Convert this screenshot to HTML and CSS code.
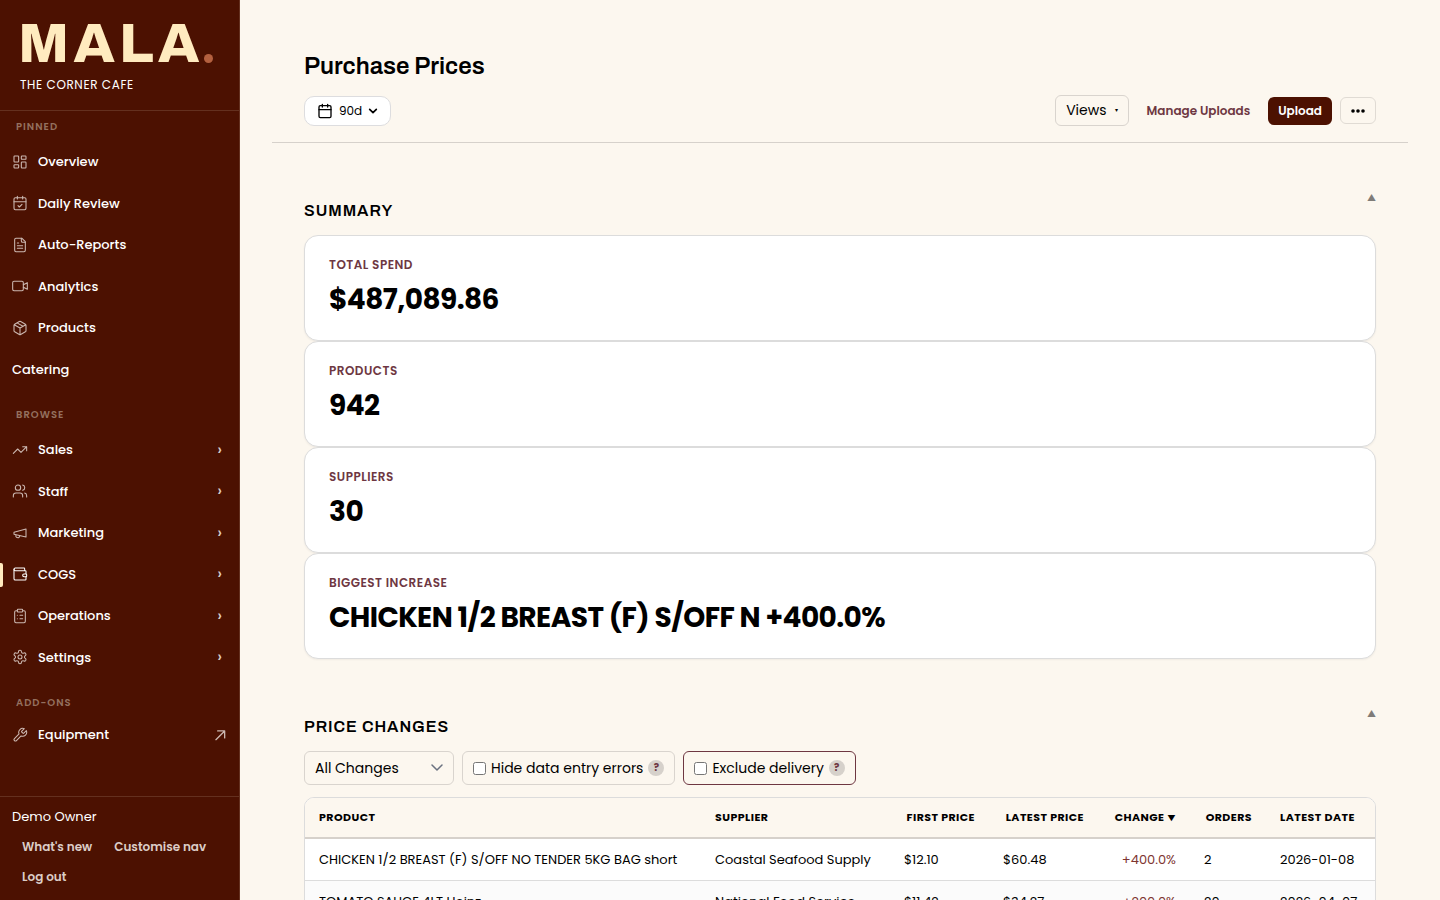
FILE: index.html
```html
<!DOCTYPE html>
<html lang="en">
<head>
<meta charset="utf-8">
<meta name="viewport" content="width=device-width, initial-scale=1">
<title>Purchase Prices</title>
<link rel="stylesheet" href="styles.css">
</head>
<body>
<div class="app">
  <aside class="sidebar">
    <div class="brand">
      <div class="logo">MALA<span class="logo-dot"></span></div>
      <div class="venue">THE CORNER CAFE</div>
    </div>
    <nav class="nav">
      <h2 class="nav-label">PINNED</h2>
      <a class="nav-item" href="#"><svg class="icon" viewBox="0 0 24 24"><rect x="3" y="3" width="7" height="9" rx="1"/><rect x="14" y="3" width="7" height="5" rx="1"/><rect x="14" y="12" width="7" height="9" rx="1"/><rect x="3" y="16" width="7" height="5" rx="1"/></svg>Overview</a>
      <a class="nav-item" href="#"><svg class="icon" viewBox="0 0 24 24"><path d="M8 2v4M16 2v4M3 10h18M9 16l2 2 4-4"/><rect x="3" y="4" width="18" height="18" rx="2"/></svg>Daily Review</a>
      <a class="nav-item" href="#"><svg class="icon" viewBox="0 0 24 24"><path d="M15 2H6a2 2 0 0 0-2 2v16a2 2 0 0 0 2 2h12a2 2 0 0 0 2-2V7Z"/><path d="M14 2v4a2 2 0 0 0 2 2h4M10 9H8M16 13H8M16 17H8"/></svg>Auto-Reports</a>
      <a class="nav-item" href="#"><svg class="icon" viewBox="0 0 24 24"><rect x="1" y="5" width="16" height="14" rx="2"/><path d="M17 10l6-3v10l-6-3"/></svg>Analytics</a>
      <a class="nav-item" href="#"><svg class="icon" viewBox="0 0 24 24"><path d="M11 21.7a2 2 0 0 0 2 0l7-4a2 2 0 0 0 1-1.7V8a2 2 0 0 0-1-1.7l-7-4a2 2 0 0 0-2 0l-7 4A2 2 0 0 0 3 8v8a2 2 0 0 0 1 1.7zM12 22V12M3.3 7L12 12l8.7-5M7.5 4.3l9 5.1"/></svg>Products</a>
      <a class="nav-item" href="#">Catering</a>
      <h2 class="nav-label">BROWSE</h2>
      <a class="nav-item" href="#"><svg class="icon" viewBox="0 0 24 24"><path d="M22 7l-8.5 8.5-5-5L2 17M16 7h6v6"/></svg>Sales<span class="chevron">›</span></a>
      <a class="nav-item" href="#"><svg class="icon" viewBox="0 0 24 24"><path d="M16 21v-2a4 4 0 0 0-4-4H6a4 4 0 0 0-4 4v2M22 21v-2a4 4 0 0 0-3-3.9M16 3.1a4 4 0 0 1 0 7.8"/><circle cx="9" cy="7" r="4"/></svg>Staff<span class="chevron">›</span></a>
      <a class="nav-item" href="#"><svg class="icon" viewBox="0 0 24 24"><path d="M3 11l18-5v12L3 14zM11.6 16.8a3 3 0 1 1-5.8-1.6"/></svg>Marketing<span class="chevron">›</span></a>
      <a class="nav-item active" href="#" aria-current="page"><svg class="icon" viewBox="0 0 24 24"><path d="M19 7V4a1 1 0 0 0-1-1H5a2 2 0 0 0 0 4h15a1 1 0 0 1 1 1v4h-3a2 2 0 0 0 0 4h3a1 1 0 0 0 1-1v-2a1 1 0 0 0-1-1"/><path d="M3 5v14a2 2 0 0 0 2 2h15a1 1 0 0 0 1-1v-4"/></svg>COGS<span class="chevron">›</span></a>
      <a class="nav-item" href="#"><svg class="icon" viewBox="0 0 24 24"><rect x="8" y="2" width="8" height="4" rx="1"/><path d="M16 4h2a2 2 0 0 1 2 2v14a2 2 0 0 1-2 2H6a2 2 0 0 1-2-2V6a2 2 0 0 1 2-2h2M12 11h4M12 16h4M8 11h.01M8 16h.01"/></svg>Operations<span class="chevron">›</span></a>
      <a class="nav-item" href="#"><svg class="icon" viewBox="0 0 24 24"><path d="M12.2 2h-.4a2 2 0 0 0-2 2v.2a2 2 0 0 1-1 1.7l-.4.3a2 2 0 0 1-2 0l-.2-.1a2 2 0 0 0-2.7.7l-.2.4a2 2 0 0 0 .7 2.7l.2.1a2 2 0 0 1 1 1.7v.5a2 2 0 0 1-1 1.8l-.2.1a2 2 0 0 0-.7 2.7l.2.4a2 2 0 0 0 2.7.7l.2-.1a2 2 0 0 1 2 0l.4.3a2 2 0 0 1 1 1.7v.2a2 2 0 0 0 2 2h.4a2 2 0 0 0 2-2v-.2a2 2 0 0 1 1-1.7l.4-.3a2 2 0 0 1 2 0l.2.1a2 2 0 0 0 2.7-.7l.2-.4a2 2 0 0 0-.7-2.7l-.2-.1a2 2 0 0 1-1-1.8v-.5a2 2 0 0 1 1-1.7l.2-.1a2 2 0 0 0 .7-2.7l-.2-.4a2 2 0 0 0-2.7-.7l-.2.1a2 2 0 0 1-2 0l-.4-.3a2 2 0 0 1-1-1.7V4a2 2 0 0 0-2-2z"/><circle cx="12" cy="12" r="3"/></svg>Settings<span class="chevron">›</span></a>
      <h2 class="nav-label addons">ADD-ONS</h2>
      <a class="nav-item" href="#"><svg class="icon" viewBox="0 0 24 24"><path d="M14.7 6.3a1 1 0 0 0 0 1.4l1.6 1.6a1 1 0 0 0 1.4 0l3.8-3.8a6 6 0 0 1-7.9 7.9l-6.9 6.9a2.1 2.1 0 0 1-3-3l6.9-6.9a6 6 0 0 1 7.9-7.9z"/></svg>Equipment<svg class="icon external" viewBox="0 0 24 24"><path d="M5 20L20 5M8 5h12v12"/></svg></a>
    </nav>
    <footer class="account">
      <div class="user">Demo Owner</div>
      <div class="account-links"><a href="#">What's new</a><a href="#">Customise nav</a><a href="#">Log out</a></div>
    </footer>
  </aside>
  <main class="main">
    <header class="page-head">
      <h1 class="title">Purchase Prices</h1>
      <div class="toolbar">
        <button class="range" type="button"><svg class="calendar" viewBox="0 0 24 24"><path d="M8 2v4M16 2v4M3 10h18"/><rect x="3" y="4" width="18" height="18" rx="2"/></svg>90d<svg class="down" viewBox="0 0 12 12"><path d="M2 4l4 4 4-4"/></svg></button>
        <div class="actions">
          <button class="views" type="button">Views<span class="views-caret">▾</span></button>
          <a class="manage" href="#">Manage Uploads</a>
          <button class="upload" type="button">Upload</button>
          <button class="more" type="button" aria-label="More actions"><svg class="dots" viewBox="0 0 14 4"><circle cx="2" cy="2" r="1.8"/><circle cx="7" cy="2" r="1.8"/><circle cx="12" cy="2" r="1.8"/></svg></button>
        </div>
      </div>
    </header>
    <section class="section">
      <div class="section-head"><h2 class="section-title">SUMMARY</h2><button class="collapse" type="button" aria-label="Collapse summary">▲</button></div>
      <div class="card"><div class="card-label">TOTAL SPEND</div><div class="card-value">$487,089.86</div></div>
      <div class="card"><div class="card-label">PRODUCTS</div><div class="card-value">942</div></div>
      <div class="card"><div class="card-label">SUPPLIERS</div><div class="card-value">30</div></div>
      <div class="card"><div class="card-label">BIGGEST INCREASE</div><div class="card-value">CHICKEN 1/2 BREAST (F) S/OFF N +400.0%</div></div>
    </section>
    <section class="section">
      <div class="section-head"><h2 class="section-title">PRICE CHANGES</h2><button class="collapse" type="button" aria-label="Collapse price changes">▲</button></div>
      <div class="filters">
        <div class="select-wrap"><select class="select" aria-label="Change type"><option>All Changes</option></select><svg class="select-caret" viewBox="0 0 12 8"><path d="M1 1l5 5 5-5"/></svg></div>
        <label class="check"><input type="checkbox">Hide data entry errors<span class="help">?</span></label>
        <label class="check strong"><input type="checkbox">Exclude delivery<span class="help">?</span></label>
      </div>
      <div class="table-wrap">
        <table class="table">
          <colgroup><col><col class="c-supplier"><col class="c-first"><col class="c-latest"><col class="c-change"><col class="c-orders"><col class="c-date"></colgroup>
          <thead><tr><th>PRODUCT</th><th>SUPPLIER</th><th class="num">FIRST PRICE</th><th class="num">LATEST PRICE</th><th class="num">CHANGE <span class="sort">▼</span></th><th class="num">ORDERS</th><th>LATEST DATE</th></tr></thead>
          <tbody>
            <tr><td>CHICKEN 1/2 BREAST (F) S/OFF NO TENDER 5KG BAG short</td><td>Coastal Seafood Supply</td><td>$12.10</td><td>$60.48</td><td class="up">+400.0%</td><td>2</td><td>2026-01-08</td></tr>
            <tr><td>TOMATO SAUCE 4LT Heinz</td><td>National Food Service</td><td>$11.42</td><td>$34.27</td><td class="up">+200.0%</td><td>20</td><td>2026-04-07</td></tr>
          </tbody>
        </table>
      </div>
    </section>
  </main>
</div>
</body>
</html>
```
FILE: styles.css
```css
* { box-sizing: border-box; }
body {
  margin: 0;
  background: #fcf7ef;
  color: #000;
  font-family: Poppins, Inter, "Noto Sans", sans-serif;
  font-size: 13px;
  line-height: 1.5;
}
h1, h2 { margin: 0; }
a { color: inherit; text-decoration: none; }
button { font: inherit; color: inherit; cursor: pointer; }
svg { fill: none; stroke: currentColor; stroke-width: 2; stroke-linecap: round; stroke-linejoin: round; flex: none; }

.app { display: flex; height: 100vh; overflow: hidden; }

.sidebar {
  display: flex;
  flex-direction: column;
  flex: none;
  width: 240px;
  background: #4c1101;
  border-right: 1px solid #64301f;
  color: #fff;
}
.brand { padding: 17px 18px 16px; border-bottom: 1px solid #64301f; }
.logo {
  display: flex;
  align-items: center;
  height: 54px;
  color: #ffebbf;
  font-family: Archivo, "Liberation Sans", sans-serif;
  font-size: 56px;
  font-weight: 800;
  line-height: 54px;
  letter-spacing: 4px;
}
.logo-dot { width: 9px; height: 9px; margin-top: 28px; border-radius: 50%; background: #b4603f; }
.venue { margin-top: 5px; padding-left: 2px; font-size: 12px; line-height: 18px; letter-spacing: 0.05em; }
.nav { flex: 1; padding-top: 8px; }
.nav-label {
  margin: 0 16px 7px;
  color: #94705f;
  font-size: 10px;
  font-weight: 600;
  line-height: 15px;
  letter-spacing: 1px;
}
.nav-item + .nav-label { margin-top: 17px; }
.nav-item + .nav-label.addons { margin-bottom: 4px; }
.nav-item {
  position: relative;
  display: flex;
  align-items: center;
  gap: 10px;
  padding: 11px 12px;
  font-weight: 500;
}
.icon { width: 16px; height: 16px; color: #ccb8b1; stroke-width: 1.6; }
.chevron { margin-left: auto; padding-right: 5px; color: #dccdc7; font-size: 16px; line-height: 16px; }
.external { width: 14px; height: 14px; margin-left: auto; stroke-width: 2.25; }
.active .icon { color: #fff; }
.active::before {
  content: "";
  position: absolute;
  left: 0;
  top: 9px;
  width: 3px;
  height: 24px;
  border-radius: 0 2px 2px 0;
  background: #ffebbf;
}
.account { padding: 10px 12px 8px; border-top: 1px solid #64301f; }
.user { margin-bottom: 6px; }
.account-links { display: flex; flex-wrap: wrap; column-gap: 2px; color: #dccdc7; font-size: 12px; font-weight: 600; }
.account-links a { padding: 6px 10px; line-height: 18px; }

.main { flex: 1; min-width: 0; padding: 48px 32px 0; overflow-y: auto; scrollbar-width: none; }
.page-head { padding: 0 32px 16px; border-bottom: 1px solid #d6d1cb; }
.title { font-family: Archivo, "Liberation Sans", sans-serif; font-size: 24px; font-weight: 600; line-height: 36px; }
.toolbar { display: flex; align-items: center; justify-content: space-between; margin-top: 11px; }
.range {
  display: flex;
  align-items: center;
  gap: 6px;
  height: 30px;
  padding: 0 12px;
  border: 1px solid #dddddf;
  border-radius: 10px;
  background: #fff;
  font-size: 12px;
}
.calendar { width: 16px; height: 16px; }
.down { width: 10px; height: 10px; }
.actions { display: flex; align-items: center; gap: 8px; }
.views {
  display: flex;
  align-items: center;
  gap: 8px;
  height: 31px;
  padding: 0 10px;
  border: 1px solid #d9d4ce;
  border-radius: 6px;
  background: transparent;
  font-size: 14px;
}
.views-caret { font-size: 6px; }
.manage { padding: 0 10px; color: #6e3742; font-size: 12px; font-weight: 600; }
.upload {
  height: 28px;
  padding: 0 10px;
  border: 0;
  border-radius: 6px;
  background: #4c1101;
  color: #fff;
  font-size: 12px;
  font-weight: 600;
}
.more {
  display: flex;
  align-items: center;
  justify-content: center;
  width: 36px;
  height: 27px;
  padding: 0;
  border: 1px solid #e0dbd4;
  border-radius: 6px;
  background: transparent;
}
.dots { width: 14px; height: 4px; fill: currentColor; stroke: none; }

.section { padding: 0 32px; margin-top: 48px; }
.section-head { display: flex; align-items: flex-start; justify-content: space-between; height: 44px; }
.section-title {
  padding-top: 8px;
  font-family: Archivo, "Liberation Sans", sans-serif;
  font-size: 16px;
  font-weight: 600;
  line-height: 24px;
  letter-spacing: 0.06em;
}
.collapse { padding: 0; border: 0; background: none; color: #7f7c78; font-size: 9px; line-height: 14px; }
.card {
  height: 106px;
  padding: 20px 24px;
  border: 1px solid #dcdcdc;
  border-radius: 14px;
  background: #fff;
  box-shadow: 0 1px 2px #0000000d;
}
.card-label { color: #6e3742; font-size: 12px; font-weight: 600; line-height: 18px; letter-spacing: 0.04em; }
.card-value { margin-top: 5px; font-size: 28px; font-weight: 700; line-height: 42px; letter-spacing: -0.02em; }

.filters { display: flex; gap: 8px; font-size: 14px; }
.select-wrap { position: relative; width: 150px; }
.select {
  width: 100%;
  height: 34px;
  padding: 0 10px;
  appearance: none;
  border: 1px solid #d9d4ce;
  border-radius: 6px;
  background: transparent;
  color: #000;
  font: inherit;
}
.select-caret { position: absolute; right: 11px; top: 13px; width: 12px; height: 8px; color: #6b7280; stroke-width: 1.5; }
.check {
  display: flex;
  align-items: center;
  gap: 5px;
  height: 34px;
  padding: 0 10px;
  border: 1px solid #d9d4ce;
  border-radius: 6px;
}
.check input { width: 13px; height: 13px; margin: 0; }
.check.strong { border-color: #6e3742; }
.help {
  width: 16px;
  height: 16px;
  border-radius: 50%;
  background: #d6d1cb;
  color: #6e3742;
  font-size: 10px;
  font-weight: 700;
  line-height: 16px;
  text-align: center;
}
.table-wrap {
  margin-top: 12px;
  overflow: hidden;
  border: 1px solid #dcdcdc;
  border-radius: 10px;
  background: #fff;
}
.table { width: 100%; table-layout: fixed; border-collapse: separate; border-spacing: 0; }
.c-supplier { width: 189px; }
.c-first { width: 99px; }
.c-latest { width: 109px; }
.c-change { width: 92px; }
.c-orders { width: 76px; }
.c-date { width: 109px; }
.table th {
  height: 41px;
  padding: 0 14px;
  border-bottom: 2px solid #d6d1cb;
  background: #fcf7ef;
  font-size: 11px;
  font-weight: 700;
  letter-spacing: 0.04em;
  text-align: left;
  white-space: nowrap;
}
.table th.num { text-align: right; }
.sort { font-size: 8px; }
.table td { height: 42px; padding: 0 14px; border-bottom: 1px solid #dcdcdc; white-space: nowrap; }
.table tr:nth-child(even) td { background: #fbfbfb; }
.table td.up { color: #7e3530; text-align: right; }
```
